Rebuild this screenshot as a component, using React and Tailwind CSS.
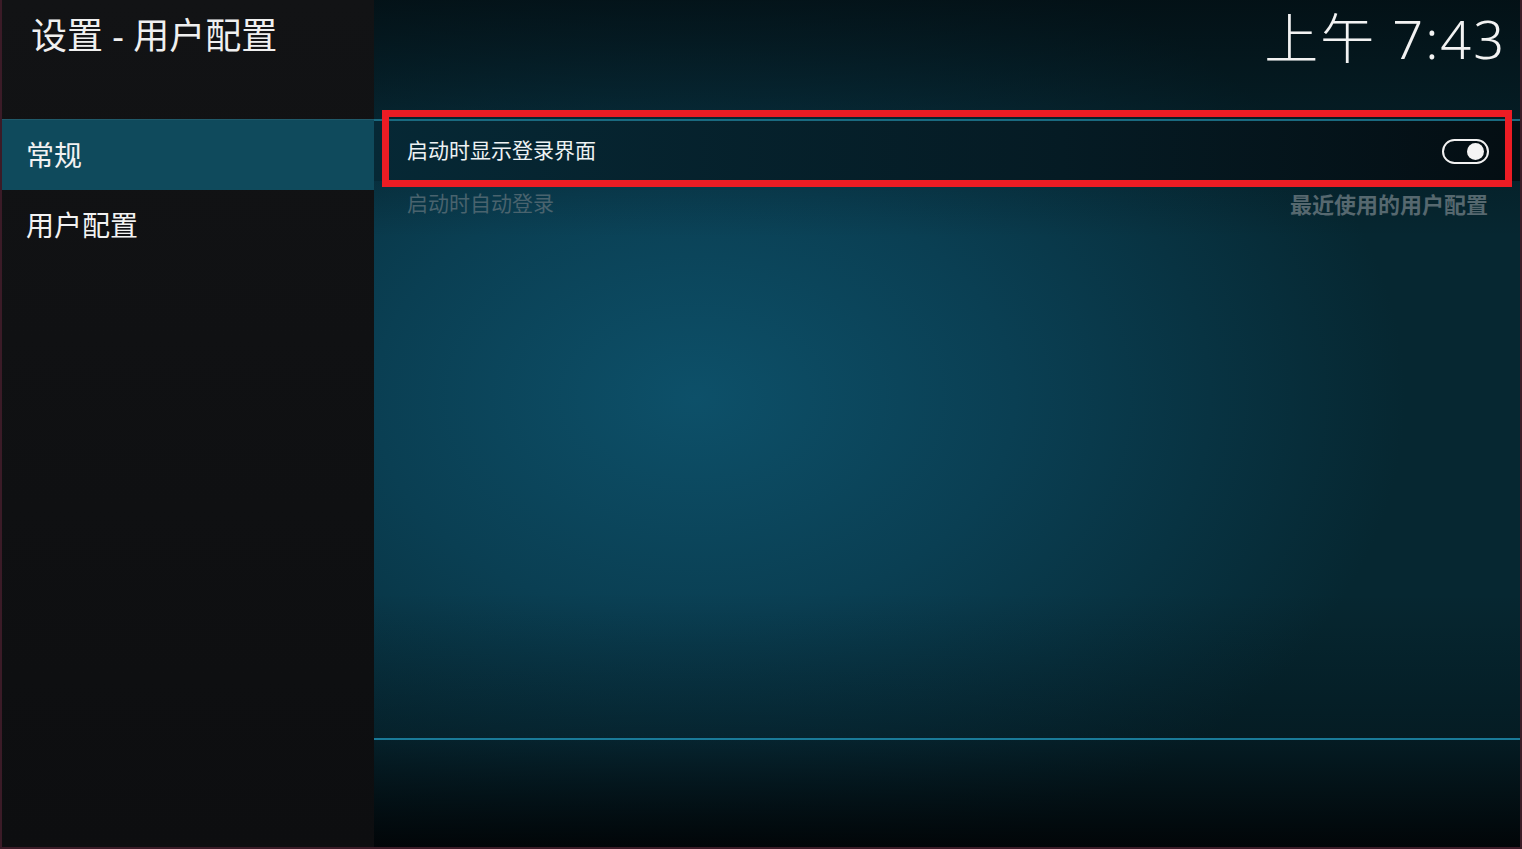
import { useState } from 'react';

const font = "font-['Noto_Sans','Noto_Sans_CJK_SC',sans-serif]";

function Toggle({ on }) {
  return (
    <div className="flex h-[25px] w-[47px] items-center rounded-full border-2 border-[#f2f2f2] px-[3px]">
      <div className={`h-[17px] w-[17px] rounded-full bg-[#f4f4f4] ${on ? 'ml-auto' : ''}`}></div>
    </div>
  );
}

export default function App() {
  const [selected] = useState(0);
  const categories = ['常规', '用户配置'];

  return (
    <div className={`flex h-[849px] w-[1522px] overflow-hidden border-x-2 border-b-2 border-[#3b1b27] bg-[#0b0c0e] ${font}`}>
      {/* sidebar */}
      <div className="flex w-[372px] flex-col bg-[linear-gradient(to_bottom,#121315,#0d0e10)]">
        <div className="h-[119px] pl-[29px] pt-[12px] text-[36px] leading-[48px] text-[#f0f0f0]">设置 - 用户配置</div>
        <div className="border-t border-[#1f5a6b]">
          {categories.map((c, i) => (
            <div
              key={c}
              className={`flex h-[70px] items-center pl-[24px] text-[28px] text-[#f2f2f2] ${i === selected ? 'bg-[#0f4a5c]' : ''}`}
            >
              {c}
            </div>
          ))}
        </div>
      </div>

      {/* main */}
      <div className="relative flex flex-1 flex-col bg-[linear-gradient(to_bottom,rgba(2,8,11,0.7)_0%,rgba(2,8,11,0)_28%,rgba(2,8,11,0)_70%,rgba(2,8,11,0.35)_87%,rgba(1,4,6,0.95)_100%),radial-gradient(ellipse_62%_58%_at_28%_47%,#0d5069_0%,#0a3f53_45%,#062731_100%)]">
        <div className="flex h-[119px] justify-end pr-[14px] pt-[2px]">
          <span className="text-[54px] font-light leading-[72px] tracking-[2px] text-[#f2f2f2]">上午 7:43</span>
        </div>

        <div className="flex h-[62px] items-center justify-between border-t-2 border-[#1a6a80] bg-[linear-gradient(to_right,#062835,#051b24_60%,#040e13)] pl-[33px] pr-[31px]">
          <span className="text-[21px] text-[#eef2f3]">启动时显示登录界面</span>
          <Toggle on />
        </div>

        <div className="flex h-[46px] items-center justify-between pl-[33px] pr-[32px]">
          <span className="text-[21px] text-[#49636e]">启动时自动登录</span>
          <span className="text-[22px] font-bold text-[#56686f]">最近使用的用户配置</span>
        </div>

        <div className="flex-1"></div>
        <div className="mb-[107px] h-[2px] bg-[#1a7a98]"></div>

        {/* annotation box */}
        <div className="pointer-events-none absolute left-[8px] top-[110px] h-[77px] w-[1130px] border-[7px] border-[#ec1c24]"></div>
      </div>
    </div>
  );
}
